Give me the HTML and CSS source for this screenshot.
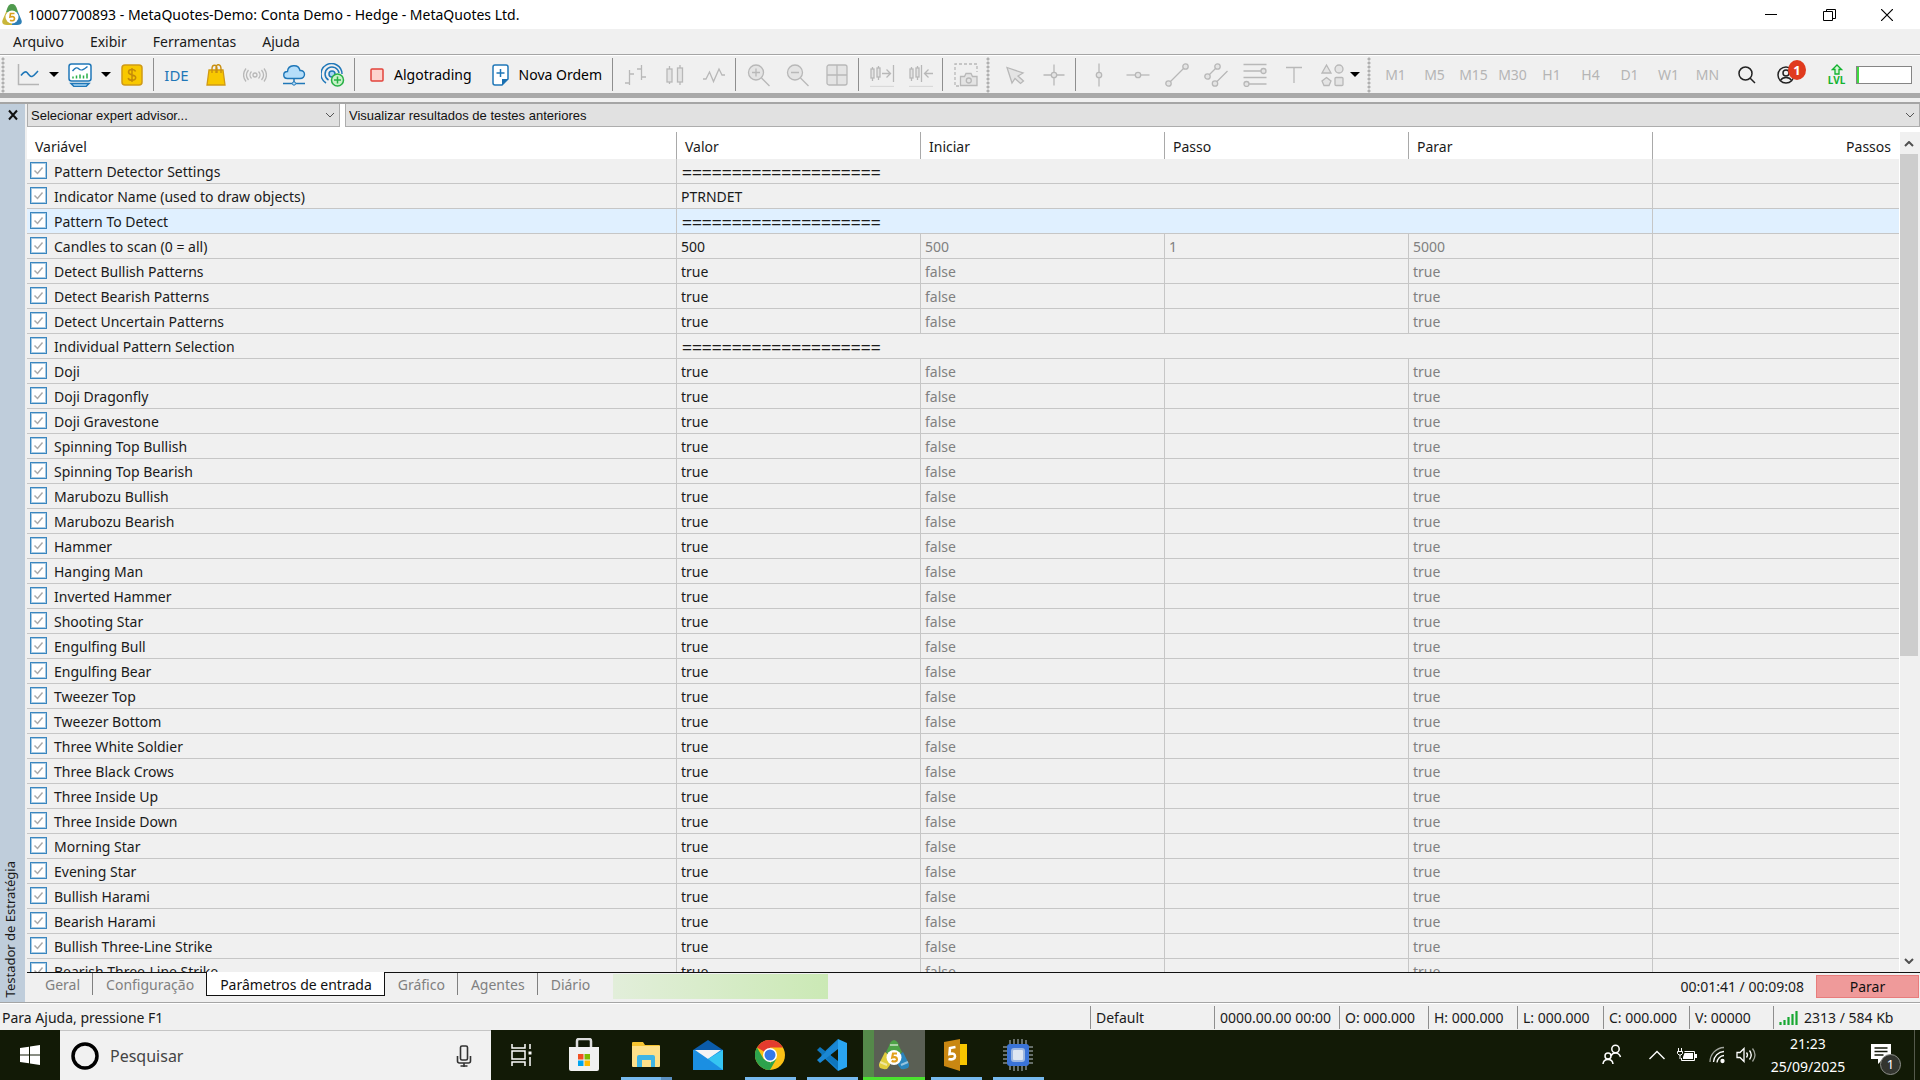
FILE: index.html
```html
<!DOCTYPE html>
<html lang="pt-BR">
<head>
<meta charset="utf-8">
<title>10007700893 - MetaQuotes-Demo: Conta Demo - Hedge - MetaQuotes Ltd.</title>
<link rel="stylesheet" href="styles.css">
</head>
<body>
<header class="titlebar">
  <svg class="app-icon" width="20" height="22" viewBox="0 0 20 22"><path d="M10 0c3 0 4 2 5 5l1 3-4 3H8L4 8l1-3c1-3 2-5 5-5z" fill="#4f9a4d"/><path d="M4 8l-3 7c-2 4 0 6 4 6h5V9z" fill="#c9b63a"/><path d="M16 8l3 7c2 4 0 6-4 6h-5V9z" fill="#2d7fb5"/><circle cx="10" cy="13" r="6.500" fill="#fff"/><path d="M12.500 9.500H8.500L8 13c3-1 4.500 0 4.500 1.800 0 2-2.500 2.400-4.500 1.400" fill="none" stroke="#d9a11f" stroke-width="1.700"/></svg>
  <h1 class="title">10007700893 - MetaQuotes-Demo: Conta Demo - Hedge - MetaQuotes Ltd.</h1>
  <div class="window-controls">
    <button class="win-btn" aria-label="Minimizar"><svg width="12" height="12" viewBox="0 0 12 12"><path d="M0 5.500h12" stroke="#000"/></svg></button>
    <button class="win-btn" aria-label="Restaurar"><svg width="13" height="12" viewBox="0 0 13 12"><path d="M.500 2.500h9v9h-9zM3.500 2.500V.500h9v9h-3" fill="none" stroke="#000"/></svg></button>
    <button class="win-btn" aria-label="Fechar"><svg width="12" height="12" viewBox="0 0 12 12"><path d="M0 0l12 12M12 0L0 12" stroke="#000" stroke-width="1.200"/></svg></button>
  </div>
</header>
<nav class="menubar">
  <button class="menu">Arquivo</button><button class="menu">Exibir</button><button class="menu">Ferramentas</button><button class="menu">Ajuda</button>
</nav>
<div class="toolbar" role="toolbar">
  <span class="grip first"></span>
  <button class="tool" aria-label="Gráfico"><svg width="24" height="24" viewBox="0 0 24 24" fill="none"><path d="M2.500 1v20.500H23" stroke="#b5b5b5" stroke-width="1.500"/><path d="M5 12.500c2.500-3 4.500-4.500 6-3s3 4.500 5 4 3.500-3 6-5.500" stroke="#1f77b8" stroke-width="1.600"/></svg></button>
  <button class="drop" aria-label="Mais gráficos"><i class="caret"></i></button>
  <button class="tool" aria-label="Perfis"><svg width="24" height="24" viewBox="0 0 24 24" fill="none"><rect x="1" y="1" width="22" height="17" rx="2.500" fill="#fff" stroke="#1f77b8" stroke-width="1.500"/><path d="M4.500 8c3-3.500 4.500-4 6.500-2s4 1.500 8.500-2.500" stroke="#1f77b8" stroke-width="1.400"/><path d="M5 15.500v-2M8.500 15.500v-3M12 15.500v-4M15.500 15.500v-3M19 15.500v-5" stroke="#27b045" stroke-width="1.500"/><path d="M3 20.500h18L18 23.500H6z" fill="#a9d6f5" stroke="#1f77b8" stroke-width="1.500"/></svg></button>
  <button class="drop" aria-label="Mais perfis"><i class="caret"></i></button>
  <button class="tool" aria-label="Símbolos"><svg width="24" height="24" viewBox="0 0 24 24"><rect x="2" y="2" width="20" height="20" rx="3" fill="#f8c800" stroke="#d09a15" stroke-width="1.500"/><path d="M15.500 8.500C15 7 13.500 6.500 12 6.500c-2 0-3.500 1-3.500 2.600 0 3.900 7.200 1.700 7.200 5.500 0 1.700-1.700 2.700-3.700 2.700S8.500 16.500 8.200 15M12 5v14" fill="none" stroke="#c48a08" stroke-width="1.500"/></svg></button>
  <span class="sep"></span>
  <button class="tool ide">IDE</button>
  <button class="tool" aria-label="Mercado"><svg width="24" height="24" viewBox="0 0 24 24"><path d="M5 7h14l2 15H3z" fill="#f8c800" stroke="#d09a15" stroke-width="1.300"/><path d="M8 10V6c0-5 5-5 5 0v4M12 10V5c0-5 5-4 5 1v4" fill="none" stroke="#c98f10" stroke-width="1.400"/></svg></button>
  <button class="tool" aria-label="Sinais"><svg width="24" height="24" viewBox="0 0 24 24" fill="none" stroke="#b8b8b8" stroke-width="1.300"><circle cx="12" cy="12" r="2"/><path d="M8.500 8.500c-2 2-2 5 0 7M15.500 8.500c2 2 2 5 0 7M5.500 7c-2.500 3-2.500 7 0 10M18.500 7c2.500 3 2.500 7 0 10M3 5.500c-3 4-3 9 0 13M21 5.500c3 4 3 9 0 13"/></svg></button>
  <button class="tool" aria-label="Nuvem"><svg width="24" height="24" viewBox="0 0 24 24"><path d="M5.500 15.500c-5 0-5-7 0-7 .5-7 11-8 12.500-1 6-.5 6 8 0 8z" fill="#b5defa" stroke="#1f77b8" stroke-width="1.400"/><path d="M12 16v3M1 20.500h9M14 20.500h9" stroke="#1f77b8" stroke-width="1.500"/><circle cx="12" cy="20.500" r="1.700" fill="#b5defa" stroke="#1f77b8"/></svg></button>
  <button class="tool" aria-label="Hospedagem virtual"><svg width="24" height="24" viewBox="0 0 24 24" fill="none" stroke="#1f77b8" stroke-width="1.500"><path d="M5 20A10.500 10.500 0 1 1 21 11"/><path d="M7.500 17A7 7 0 1 1 18 10"/><circle cx="11" cy="11" r="3" fill="#a9d6f5"/><circle cx="16.500" cy="17" r="6" fill="#c9f2c9" stroke="#27b045"/><path d="M16.500 13.500v7M13 17h7" stroke="#27b045"/></svg></button>
  <span class="sep"></span>
  <button class="text-tool"><svg width="14" height="14" viewBox="0 0 14 14"><rect x="1" y="1" width="12" height="12" rx="1" fill="#fdd3cd" stroke="#e2433b" stroke-width="1.500"/></svg>Algotrading</button>
  <button class="text-tool"><svg width="17" height="22" viewBox="0 0 17 22"><path d="M3 1h11c1.500 0 2 .5 2 2v12l-6 6H3c-1.500 0-2-.5-2-2V3c0-1.500.5-2 2-2z" fill="#fff" stroke="#1f77b8" stroke-width="1.500"/><path d="M16 15l-6 6v-6z" fill="#1a6fb0"/><path d="M8.500 5v8M4.500 9h8" stroke="#1f77b8" stroke-width="1.500"/></svg>Nova Ordem</button>
  <span class="sep"></span>
  <button class="tool off" aria-label="Barras"><svg width="24" height="24" viewBox="0 0 24 24"><path d="M5.500 7v15M1 20h4.500M5.500 11H10M17.500 2v15M13 6h4.500M17.500 14H22"/></svg></button>
  <button class="tool off" aria-label="Velas"><svg width="24" height="24" viewBox="0 0 24 24"><path d="M6.500 3v18M17 2v20"/><rect x="4" y="6" width="5" height="13"/><rect x="14.500" y="5" width="5" height="14"/></svg></button>
  <button class="tool off" aria-label="Linha"><svg width="24" height="24" viewBox="0 0 24 24"><path fill="none" d="M1 16h3l3.500-7 4 9.500L17 6l3 6h3"/></svg></button>
  <span class="sep"></span>
  <button class="tool off" aria-label="Ampliar"><svg width="24" height="24" viewBox="0 0 24 24"><circle cx="9" cy="9.500" r="7.500"/><path d="M14.500 15l8 8M9 5.500v8M5 9.500h8"/></svg></button>
  <button class="tool off" aria-label="Reduzir"><svg width="24" height="24" viewBox="0 0 24 24"><circle cx="9" cy="9.500" r="7.500"/><path d="M14.500 15l8 8M5 9.500h8"/></svg></button>
  <button class="tool off" aria-label="Janelas"><svg width="24" height="24" viewBox="0 0 24 24"><rect x="2" y="2" width="20" height="20" rx="2"/><path d="M12 2v20M2 12h20"/></svg></button>
  <span class="sep"></span>
  <button class="tool off" aria-label="Rolagem"><svg width="26" height="24" viewBox="0 0 26 24"><path d="M3.500 4v14M9.500 3v14"/><rect x="2" y="6" width="3" height="9"/><rect x="8" y="5" width="3" height="9"/><path fill="none" d="M13 10.500h8M17.500 6.500l4 4-4 4M24.500 2v17"/><path opacity=".4" d="M1 23.500h24"/></svg></button>
  <button class="tool off" aria-label="Deslocamento"><svg width="26" height="24" viewBox="0 0 26 24"><path d="M3.500 4v14M9.500 3v14"/><rect x="2" y="6" width="3" height="9"/><rect x="8" y="5" width="3" height="9"/><path fill="none" d="M13.500 2v17M17 10.500h8M20.500 6.500l-4 4 4 4"/><path opacity=".4" d="M1 23.500h24"/></svg></button>
  <span class="sep"></span>
  <button class="tool off" aria-label="Captura"><svg width="24" height="24" viewBox="0 0 24 24"><path fill="none" stroke-dasharray="3 2" d="M5 23H1V1h22v8"/><path d="M6.500 13.500h4l1.500-3h5l1.500 3h4.500v9H6.500z"/><circle cx="14.800" cy="17.500" r="2.500"/></svg></button>
  <span class="grip"></span>
  <button class="tool off" aria-label="Cursor"><svg width="24" height="24" viewBox="0 0 24 24"><path d="M4 4.500l16 5.500-5 3 5.500 5-3 2.500-5.500-5-3 4.500z"/></svg></button>
  <button class="tool off" aria-label="Mira"><svg width="24" height="24" viewBox="0 0 24 24"><path d="M12 1.500v21M1.500 12h21"/><circle cx="12" cy="12" r="2.700"/></svg></button>
  <span class="sep"></span>
  <button class="tool off" aria-label="Linha vertical"><svg width="24" height="24" viewBox="0 0 24 24"><path d="M12 .500v23"/><circle cx="12" cy="12" r="2.700"/></svg></button>
  <button class="tool off" aria-label="Linha horizontal"><svg width="24" height="24" viewBox="0 0 24 24"><path d="M.500 12h23"/><circle cx="12" cy="12" r="2.700"/></svg></button>
  <button class="tool off" aria-label="Tendência"><svg width="24" height="24" viewBox="0 0 24 24"><path d="M3.500 20.500L20.500 3.500"/><circle cx="3.500" cy="20.500" r="2.700"/><circle cx="20.500" cy="3.500" r="2.700"/></svg></button>
  <button class="tool off" aria-label="Canal"><svg width="24" height="24" viewBox="0 0 24 24"><path d="M3.500 13.500l10-10M11 20.500L23.500 8"/><circle cx="3.500" cy="13.500" r="2.700"/><circle cx="13.500" cy="3.500" r="2.700"/><circle cx="11" cy="20.500" r="2.700"/></svg></button>
  <button class="tool off" aria-label="Fibonacci"><svg width="24" height="24" viewBox="0 0 24 24"><path d="M.500 1.500h23M.500 8h18M.500 14.500h23M6 21h17.500"/><circle cx="20.500" cy="8" r="2.500"/><circle cx="3.500" cy="21" r="2.500"/></svg></button>
  <button class="tool off" aria-label="Texto"><svg width="24" height="24" viewBox="0 0 24 24"><path d="M4 4.500h16M12 4.500V20"/></svg></button>
  <button class="tool off" aria-label="Formas"><svg width="24" height="24" viewBox="0 0 24 24"><path d="M5.500 2l4.500 8H1z"/><circle cx="18" cy="6" r="4"/><path d="M5.500 14.500L10 18l-2 4.500H3L1 18z"/><rect x="14" y="14.500" width="8" height="8" rx="1"/></svg></button>
  <button class="drop tight" aria-label="Mais formas"><i class="caret"></i></button>
  <span class="grip"></span>
  <button class="tool frame">M1</button><button class="tool frame">M5</button><button class="tool frame">M15</button><button class="tool frame">M30</button><button class="tool frame">H1</button><button class="tool frame">H4</button><button class="tool frame">D1</button><button class="tool frame">W1</button><button class="tool frame">MN</button>
  <div class="tool-end">
    <button class="tool" aria-label="Pesquisar"><svg width="20" height="20" viewBox="0 0 20 20" fill="none" stroke="#222" stroke-width="1.500"><circle cx="8.500" cy="8.500" r="6.500"/><path d="M13 13l5 5"/></svg></button>
    <button class="tool account" aria-label="Conta"><svg width="18" height="18" viewBox="0 0 18 18" fill="none" stroke="#222" stroke-width="1.500"><circle cx="9" cy="9" r="8"/><circle cx="9" cy="7" r="3"/><path d="M3.500 14.500c2-4 9-4 11 0"/></svg><span class="badge">1</span></button>
    <button class="tool level" aria-label="Nível"><svg width="12" height="11" viewBox="0 0 12 11"><path d="M6 1l4.500 4.500H8v4.500H4V5.500H1.500z" fill="#d5f5d5" stroke="#12b32f" stroke-width="1.300"/></svg><span>LVL</span></button>
    <span class="meter"></span>
  </div>
</div>
<main class="tester">
  <aside class="side">
    <button class="side-close" aria-label="Fechar painel"><svg width="12" height="12" viewBox="0 0 12 12"><path d="M2 1.500l8 9M10 1.500l-8 9" stroke="#111" stroke-width="2"/></svg></button>
    <span class="side-title">Testador de Estratégia</span>
  </aside>
  <section class="panel">
    <div class="combos">
      <select class="combo expert" aria-label="Expert advisor"><option>Selecionar expert advisor...</option></select>
      <select class="combo results" aria-label="Resultados"><option>Visualizar resultados de testes anteriores</option></select>
    </div>
    <div class="grid">
      <div class="grid-view">
      <table class="inputs">
        <colgroup><col><col class="c-val"><col class="c-val"><col class="c-val"><col class="c-val"><col class="c-steps"></colgroup>
        <thead><tr><th>Variável</th><th>Valor</th><th>Iniciar</th><th>Passo</th><th>Parar</th><th>Passos</th></tr></thead>
        <tbody>
        <tr><td><label><input type="checkbox" checked>Pattern Detector Settings</label></td><td colspan="4" class="rule">====================</td><td></td></tr>
        <tr><td><label><input type="checkbox" checked>Indicator Name (used to draw objects)</label></td><td colspan="4">PTRNDET</td><td></td></tr>
        <tr class="selected"><td><label><input type="checkbox" checked>Pattern To Detect</label></td><td colspan="4" class="rule">====================</td><td></td></tr>
        <tr><td><label><input type="checkbox" checked>Candles to scan (0 = all)</label></td><td>500</td><td>500</td><td>1</td><td>5000</td><td></td></tr>
        <tr><td><label><input type="checkbox" checked>Detect Bullish Patterns</label></td><td>true</td><td>false</td><td></td><td>true</td><td></td></tr>
        <tr><td><label><input type="checkbox" checked>Detect Bearish Patterns</label></td><td>true</td><td>false</td><td></td><td>true</td><td></td></tr>
        <tr><td><label><input type="checkbox" checked>Detect Uncertain Patterns</label></td><td>true</td><td>false</td><td></td><td>true</td><td></td></tr>
        <tr><td><label><input type="checkbox" checked>Individual Pattern Selection</label></td><td colspan="4" class="rule">====================</td><td></td></tr>
        <tr><td><label><input type="checkbox" checked>Doji</label></td><td>true</td><td>false</td><td></td><td>true</td><td></td></tr>
        <tr><td><label><input type="checkbox" checked>Doji Dragonfly</label></td><td>true</td><td>false</td><td></td><td>true</td><td></td></tr>
        <tr><td><label><input type="checkbox" checked>Doji Gravestone</label></td><td>true</td><td>false</td><td></td><td>true</td><td></td></tr>
        <tr><td><label><input type="checkbox" checked>Spinning Top Bullish</label></td><td>true</td><td>false</td><td></td><td>true</td><td></td></tr>
        <tr><td><label><input type="checkbox" checked>Spinning Top Bearish</label></td><td>true</td><td>false</td><td></td><td>true</td><td></td></tr>
        <tr><td><label><input type="checkbox" checked>Marubozu Bullish</label></td><td>true</td><td>false</td><td></td><td>true</td><td></td></tr>
        <tr><td><label><input type="checkbox" checked>Marubozu Bearish</label></td><td>true</td><td>false</td><td></td><td>true</td><td></td></tr>
        <tr><td><label><input type="checkbox" checked>Hammer</label></td><td>true</td><td>false</td><td></td><td>true</td><td></td></tr>
        <tr><td><label><input type="checkbox" checked>Hanging Man</label></td><td>true</td><td>false</td><td></td><td>true</td><td></td></tr>
        <tr><td><label><input type="checkbox" checked>Inverted Hammer</label></td><td>true</td><td>false</td><td></td><td>true</td><td></td></tr>
        <tr><td><label><input type="checkbox" checked>Shooting Star</label></td><td>true</td><td>false</td><td></td><td>true</td><td></td></tr>
        <tr><td><label><input type="checkbox" checked>Engulfing Bull</label></td><td>true</td><td>false</td><td></td><td>true</td><td></td></tr>
        <tr><td><label><input type="checkbox" checked>Engulfing Bear</label></td><td>true</td><td>false</td><td></td><td>true</td><td></td></tr>
        <tr><td><label><input type="checkbox" checked>Tweezer Top</label></td><td>true</td><td>false</td><td></td><td>true</td><td></td></tr>
        <tr><td><label><input type="checkbox" checked>Tweezer Bottom</label></td><td>true</td><td>false</td><td></td><td>true</td><td></td></tr>
        <tr><td><label><input type="checkbox" checked>Three White Soldier</label></td><td>true</td><td>false</td><td></td><td>true</td><td></td></tr>
        <tr><td><label><input type="checkbox" checked>Three Black Crows</label></td><td>true</td><td>false</td><td></td><td>true</td><td></td></tr>
        <tr><td><label><input type="checkbox" checked>Three Inside Up</label></td><td>true</td><td>false</td><td></td><td>true</td><td></td></tr>
        <tr><td><label><input type="checkbox" checked>Three Inside Down</label></td><td>true</td><td>false</td><td></td><td>true</td><td></td></tr>
        <tr><td><label><input type="checkbox" checked>Morning Star</label></td><td>true</td><td>false</td><td></td><td>true</td><td></td></tr>
        <tr><td><label><input type="checkbox" checked>Evening Star</label></td><td>true</td><td>false</td><td></td><td>true</td><td></td></tr>
        <tr><td><label><input type="checkbox" checked>Bullish Harami</label></td><td>true</td><td>false</td><td></td><td>true</td><td></td></tr>
        <tr><td><label><input type="checkbox" checked>Bearish Harami</label></td><td>true</td><td>false</td><td></td><td>true</td><td></td></tr>
        <tr><td><label><input type="checkbox" checked>Bullish Three-Line Strike</label></td><td>true</td><td>false</td><td></td><td>true</td><td></td></tr>
        <tr><td><label><input type="checkbox" checked>Bearish Three-Line Strike</label></td><td>true</td><td>false</td><td></td><td>true</td><td></td></tr>
        </tbody>
      </table>
      </div>
      <div class="scrollbar">
        <svg width="10" height="6" viewBox="0 0 10 6"><path d="M1 5l4-4 4 4" fill="none" stroke="#505050" stroke-width="2"/></svg>
        <div class="track"><div class="thumb"></div></div>
        <svg width="10" height="6" viewBox="0 0 10 6"><path d="M1 1l4 4 4-4" fill="none" stroke="#505050" stroke-width="2"/></svg>
      </div>
    </div>
    <div class="tabs">
      <button class="tab">Geral</button><button class="tab">Configuração</button><button class="tab active">Parâmetros de entrada</button><button class="tab">Gráfico</button><button class="tab">Agentes</button><button class="tab">Diário</button>
      <div class="progress"></div>
      <span class="elapsed">00:01:41 / 00:09:08</span>
      <button class="stop">Parar</button>
    </div>
  </section>
</main>
<footer class="statusbar">
  <span class="status-help">Para Ajuda, pressione F1</span>
  <span class="cell profile">Default</span><span class="cell date">0000.00.00 00:00</span><span class="cell price">O: 000.000</span><span class="cell price">H: 000.000</span><span class="cell price low">L: 000.000</span><span class="cell price low">C: 000.000</span><span class="cell volume">V: 00000</span>
  <span class="cell traffic"><svg width="19" height="14" viewBox="0 0 19 14"><path d="M1.500 14v-3M5.500 14v-5M9.500 14V6M13.500 14V3M17.500 14V0" stroke="#18a832" stroke-width="2.200"/></svg>2313 / 584 Kb</span>
</footer>
<div class="taskbar">
  <button class="start" aria-label="Iniciar"><svg width="20" height="20" viewBox="0 0 20 20" fill="#fff"><path d="M0 3l9-1.300v7.800H0zM10 1.500L20 0v9.500H10zM0 10.500h9v7.800L0 17zM10 10.500h10V20l-10-1.500z"/></svg></button>
  <label class="search">
    <svg width="28" height="28" viewBox="0 0 28 28"><circle cx="14" cy="14" r="12" fill="none" stroke="#000" stroke-width="3.500"/></svg>
    <input type="text" placeholder="Pesquisar" aria-label="Pesquisar">
    <svg width="16" height="22" viewBox="0 0 16 22" fill="none" stroke="#333" stroke-width="1.600"><rect x="4.500" y="1" width="7" height="14" rx="1.500"/><path d="M1.500 11v5q0 2 2 2h9q2 0 2-2v-5M8 18v4M4.500 21h7"/></svg>
  </label>
  <button class="app" aria-label="Visão de tarefas"><svg width="22" height="24" viewBox="0 0 22 24" fill="none" stroke="#fff" stroke-width="1.500"><path d="M1 1v4h13V1M1 23v-4h13v4"/><rect x="1" y="8" width="13" height="8"/><path d="M19 1v5M19 14v9"/><path d="M17.500 10h3" stroke-width="3"/></svg></button>
  <button class="app" aria-label="Store"><svg width="30" height="34" viewBox="0 0 30 34"><path d="M8 10V3q0-2 2-2h10q2 0 2 2v7" fill="none" stroke="#ddd" stroke-width="2.500"/><path d="M0 9h30v22q0 2-2 2H2q-2 0-2-2z" fill="#f1f1f1"/><path d="M9 16h5.500v5.500H9z" fill="#f25022"/><path d="M15.500 16H21v5.500h-5.500z" fill="#7fba00"/><path d="M9 22.500h5.500V28H9z" fill="#00a4ef"/><path d="M15.500 22.500H21V28h-5.500z" fill="#ffb900"/></svg></button>
  <button class="app open multi" aria-label="Explorador"><svg width="28" height="26" viewBox="0 0 28 26"><path d="M0 1q0-1 1-1h10l2 3h14q1 0 1 1v4H0z" fill="#f5c431"/><path d="M0 4h28v20q0 1-1 1H1q-1 0-1-1z" fill="#fde08a"/><path d="M5 25V15q0-2 2-2h14q2 0 2 2v10h-4v-7h-9v7z" fill="#3fb5e5"/></svg></button>
  <button class="app" aria-label="E-mail"><svg width="30" height="30" viewBox="0 0 30 30"><path d="M0 10L15 0l15 10z" fill="#0b5cab"/><path d="M0 10h30v20H0z" fill="#1b8fe2"/><path d="M2 10h26L15 19z" fill="#f4f4f4"/><path d="M30 10L15 19l15 11z" fill="#35c5f2"/></svg></button>
  <button class="app open" aria-label="Chrome"><svg width="30" height="30" viewBox="0 0 30 30"><circle cx="15" cy="15" r="15" fill="#fbc116"/><path d="M15 15L2 7.500A15 15 0 0 1 28 7.500H15z" fill="#e33b2e"/><path d="M2 7.500l6.500 11.200L15 22v8A15 15 0 0 1 2 7.500z" fill="#2da24c"/><path d="M21.500 18.700L15 30l-3-.300 4-8z" fill="#2da24c"/><circle cx="15" cy="15" r="7" fill="#fff"/><circle cx="15" cy="15" r="5.500" fill="#3579e8"/></svg></button>
  <button class="app open" aria-label="Visual Studio Code"><svg width="30" height="32" viewBox="0 0 30 32"><path d="M21 0l-17 16 17 16v-9L13 16l8-7z" fill="#1583cf"/><path d="M0 11l3-3 18 14v8z" fill="#0f76bd"/><path d="M0 21l3 3L21 10V2z" fill="#1a87d4"/><path d="M21 0l9 4v24l-9 4z" fill="#2aa5f2"/></svg></button>
  <button class="app active" aria-label="MetaTrader 5"><svg width="30" height="30" viewBox="0 0 30 30"><path d="M15 0q4 1 5 6l3 6-3 3H10l-3-3 3-6q1-5 5-6z" fill="#4ea347"/><path d="M6 12l5 4v9l-3 4q-9 1-8-5z" fill="#e0cd3c"/><path d="M24 12l-5 4v9l3 4q9 1 8-5z" fill="#2a86bd"/><path d="M1 22l7 3M22 25l7-3M11 5h8" stroke="#fff" stroke-opacity=".5" stroke-width="2"/><circle cx="15" cy="17.500" r="7.500" fill="#fff"/><path d="M18 13.500h-4l-.800 4c3-1 4.800 0 4.800 2s-3 2.600-5.300 1.200" fill="none" stroke="#e2a11c" stroke-width="2.200"/></svg></button>
  <button class="app open" aria-label="MetaEditor"><svg width="24" height="32" viewBox="0 0 24 32"><path d="M10 5h13v21H10z" fill="#f6c500"/><path d="M0 3L16 0v32L0 27z" fill="#c98712"/><path d="M11.500 8L6 9l-.500 6c4-1 5.500 0 5.500 2.500S8 21 4.500 20" fill="none" stroke="#fff" stroke-width="2.600"/></svg></button>
  <button class="app open" aria-label="Processador"><svg width="30" height="32" viewBox="0 0 30 32"><path d="M7 1v30M11 0v32M15 0v32M19 0v32M23 1v30M0 8h30M0 12h30M0 16h30M0 20h30M0 24h30" stroke="#b9c2cc"/><rect x="4" y="5" width="22" height="22" rx="3" fill="#3a74d8"/><rect x="9" y="10" width="12" height="12" rx="2" fill="#dfe7f2" stroke="#9db7e0" stroke-width="2"/></svg></button>
  <div class="tray">
    <button class="tray-btn people" aria-label="Pessoas"><svg width="20" height="22" viewBox="0 0 20 22" fill="none" stroke="#fff" stroke-width="1.500"><circle cx="13.500" cy="5" r="3.700"/><path d="M9 12c2-4 8-4 9.500 1"/><circle cx="6" cy="12" r="3"/><path d="M1 20c.5-6 9.500-6 10 0"/></svg></button>
    <button class="tray-btn" aria-label="Ícones ocultos"><svg width="16" height="10" viewBox="0 0 16 10"><path d="M.500 9L8 1.500 15.500 9" fill="none" stroke="#fff" stroke-width="1.400"/></svg></button>
    <button class="tray-btn" aria-label="Bateria"><svg width="20" height="14" viewBox="0 0 20 14"><path d="M7.500 3.500h10v9h-13V10" fill="none" stroke="#fff"/><path d="M7.500 5H16v6H6V9z" fill="#fff"/><path d="M18 6h2v4h-2z" fill="#fff"/><path d="M1.500 0v3M4.500 0v3M.500 3.500h5v2L4 7H2L.500 5.500zM3 7v4" fill="none" stroke="#fff"/></svg></button>
    <button class="tray-btn" aria-label="Rede"><svg width="16" height="18" viewBox="0 0 16 18" fill="none" stroke="#fff" stroke-width="1.300"><path d="M1 16A14.500 14.500 0 0 1 15 1.500" opacity=".6"/><path d="M4.500 16A11 11 0 0 1 15 5.500M8 16.500A7.500 7.500 0 0 1 15 9.500"/><circle cx="13.500" cy="15" r="1.500" fill="#fff"/></svg></button>
    <button class="tray-btn" aria-label="Volume"><svg width="22" height="16" viewBox="0 0 22 16" fill="none" stroke="#fff" stroke-width="1.300"><path d="M1 5.500h3l4-4v13l-4-4H1z"/><path d="M10.500 5.500q2 2.500 0 5M13.500 3.500q3.500 4.500 0 9"/><path d="M16.500 1.500q5 6.500 0 13" opacity=".6"/></svg></button>
    <div class="clock"><time>21:23</time><time>25/09/2025</time></div>
    <button class="notify" aria-label="Notificações"><svg width="20" height="20" viewBox="0 0 20 20"><path d="M0 0h20v15h-8l-5 5v-5H0z" fill="#fff"/><path d="M3.500 4h13M3.500 7.500h13M3.500 11h9" stroke="#14190a" stroke-width="1.300"/></svg><span class="count">1</span></button>
  </div>
</div>
</body>
</html>
```
FILE: styles.css
```css
* { box-sizing: border-box; }
html, body { height: 100%; }
body {
  margin: 0;
  display: flex;
  flex-direction: column;
  overflow: hidden;
  background: #f0f0f0;
  color: #1a1a1a;
  font: 14px/20px "Noto Sans", "Open Sans", sans-serif;
}
button {
  padding: 0;
  border: 0;
  background: none;
  color: inherit;
  font: inherit;
}
svg { display: block; flex: none; }

/* Title bar and menu */
.titlebar {
  display: flex;
  align-items: center;
  height: 29px;
  padding-left: 2px;
  background: #fff;
  flex: none;
}
.title { margin: 0 0 0 6px; font-size: 14px; font-weight: 400; color: #000; }
.window-controls { display: flex; margin-left: auto; padding-right: 4px; }
.win-btn { display: grid; place-items: center; width: 58px; height: 28px; }
.menubar {
  display: flex;
  gap: 26px;
  height: 26px;
  padding-left: 13px;
  border-bottom: 1px solid #a5a5a5;
  flex: none;
}

/* Toolbar */
.toolbar {
  display: flex;
  align-items: center;
  height: 43px;
  border-top: 1px solid #fff;
  border-bottom: 5px solid #a9a9a9;
  background: #f0f0f0;
  flex: none;
}
.grip {
  width: 10px;
  height: 36px;
  flex: none;
  background: radial-gradient(circle, #b0b0b0 1px, transparent 2px) 1px 0 / 4px 4px repeat-y;
}
.grip.first { width: 8px; }
.tool {
  display: flex;
  align-items: center;
  justify-content: center;
  width: 39px;
  height: 36px;
  flex: none;
}
.ide { color: #1f77b8; font-size: 15px; }
.off svg { fill: #e4e4e4; stroke: #b8b8b8; stroke-width: 1.3; }
.frame { color: #b5b5b5; }
.sep { width: 1px; height: 33px; margin: 0 3px 0 2px; background: #8e8e8e; flex: none; }
.drop { width: 13px; height: 36px; display: grid; place-items: center; flex: none; }
.drop.tight { margin: 0 5px 0 -4px; }
.caret { border: 5px solid transparent; border-top-color: #000; border-bottom: 0; }
.text-tool {
  display: flex;
  align-items: center;
  gap: 10px;
  height: 36px;
  padding: 0 8px 0 12px;
  color: #000;
  white-space: nowrap;
  flex: none;
}
.tool-end { display: flex; align-items: center; margin-left: auto; padding-right: 8px; }
.account { position: relative; }
.badge {
  position: absolute;
  left: 22px;
  top: 3px;
  width: 18px;
  height: 20px;
  border-radius: 50%;
  background: #e03a1e;
  color: #fff;
  font-size: 13px;
  font-weight: 700;
}
.level {
  flex-direction: column;
  margin: 0 0 0 12px;
  color: #12b32f;
  font-size: 10px;
  font-weight: 700;
  line-height: 11px;
}
.meter {
  width: 56px;
  height: 18px;
  border: 1px solid #858585;
  background: linear-gradient(90deg, #3fd93f 2px, #fff 2px);
}

/* Strategy tester */
.tester {
  display: flex;
  flex: 1;
  min-height: 0;
  margin-top: 4px;
  border-top: 2px solid #a5a5a5;
  border-bottom: 1px solid #a5a5a5;
}
.side {
  display: flex;
  flex-direction: column;
  align-items: center;
  justify-content: space-between;
  width: 25px;
  padding: 5px 5px 5px 0;
  background: #bfcddb;
  flex: none;
}
.side-close { margin-left: 5px; }
.side-title { writing-mode: vertical-rl; transform: rotate(180deg); font-size: 13px; }
.panel { display: flex; flex-direction: column; flex: 1; min-width: 0; padding-left: 2px; }
.combos { display: flex; gap: 5px; background: #fff; flex: none; }
.combo {
  appearance: none;
  height: 23px;
  padding: 2px 24px 0 3px;
  border: 1px solid #adadad;
  border-top: 0;
  border-radius: 0;
  background: #e1e1e1 url("data:image/svg+xml,%3Csvg xmlns='http://www.w3.org/2000/svg' width='10' height='6'%3E%3Cpath d='M1 1l4 4 4-4' fill='none' stroke='%23555'/%3E%3C/svg%3E") no-repeat right 4px center;
  color: #111;
  font: 13px/20px "Liberation Sans", Arial, sans-serif;
}
.expert { width: 313px; }
.results { flex: 1; }
.grid { display: flex; flex: 1; min-height: 0; padding-top: 5px; background: #fff; }
.grid-view { flex: 1; min-width: 0; overflow: hidden; background: #f0f0f0; }
.inputs { width: 100%; table-layout: fixed; border-collapse: separate; border-spacing: 0; }
.c-val { width: 244px; }
.c-steps { width: 247px; }
.inputs th {
  height: 27px;
  padding: 2px 8px 0;
  background: #fff;
  border-left: 1px solid #a9a9a9;
  font-weight: 400;
  text-align: left;
}
.inputs th:first-child { border-left: 0; }
.inputs th:last-child { text-align: right; }
.inputs td {
  height: 25px;
  padding: 2px 4px 0;
  border-left: 1px solid #c6c6c6;
  border-bottom: 1px solid #c6c6c6;
  color: #808080;
  white-space: nowrap;
}
.inputs td:first-child { padding-left: 3px; border-left: 0; }
.inputs td:nth-child(-n+2) { color: #1a1a1a; }
.inputs .rule { padding: 4px 0 0 5px; font: 17px/20px "Liberation Sans", Arial, sans-serif; }
.inputs .selected td { background: #e0f0ff; }
.inputs label { display: flex; align-items: center; gap: 7px; height: 20px; }
.inputs input {
  appearance: none;
  width: 17px;
  height: 17px;
  margin: 0 0 4px;
  border: 1px solid #3a86bf;
  outline: 1px solid #a8cae2;
  outline-offset: -2px;
  background: #fff;
}
.inputs input:checked {
  background: #fff url("data:image/svg+xml,%3Csvg xmlns='http://www.w3.org/2000/svg' width='11' height='9'%3E%3Cpath d='M1.500 4.500l3 3 5-6' fill='none' stroke='%23aaa' stroke-width='1.500'/%3E%3C/svg%3E") no-repeat center;
}
.scrollbar {
  display: flex;
  flex-direction: column;
  align-items: center;
  width: 21px;
  padding: 9px 2px 8px 0;
  background: #f0f0f0;
  border-left: 1px solid #fff;
  flex: none;
}
.track { flex: 1; align-self: stretch; margin: 7px 0; }
.thumb { height: 63%; background: #cdcdcd; }

/* Tester tabs */
.tabs {
  display: flex;
  align-items: flex-start;
  height: 30px;
  border-top: 1px solid #111;
  flex: none;
}
.tab { height: 22px; padding: 2px 12px 0 13px; color: #808080; white-space: nowrap; }
.tab:first-child { padding-left: 18px; }
.tab + .tab { border-left: 1px solid #808080; }
.tabs .active { height: 24px; margin-top: -1px; border: 1px solid #111; border-top: 0; background: #fff; color: #111; }
.tabs .active + .tab { border-left: 0; }
.progress { width: 215px; height: 25px; margin: 1px auto 0 11px; background: linear-gradient(90deg, #e2eeda, #cbe9b5); }
.elapsed { margin: 4px 12px 0 0; }
.stop { width: 103px; height: 23px; margin: 2px 1px 0 0; border: 1px solid #e87c7c; background: #ef9a9a; color: #111; line-height: 20px; }

/* Status bar */
.statusbar {
  display: flex;
  height: 27px;
  padding: 2px 0 1px;
  line-height: 24px;
  border-top: 1px solid #fff;
  white-space: nowrap;
  flex: none;
}
.status-help { flex: 1; padding-left: 2px; }
.cell { padding-left: 5px; border-left: 1px solid #8e8e8e; }
.profile { width: 124px; }
.date { width: 125px; }
.price { width: 89px; }
.low { width: 86px; }
.volume { width: 84px; }
.traffic { display: flex; align-items: center; gap: 6px; width: 147px; }

/* Taskbar */
.taskbar { display: flex; height: 50px; background: #121a06; color: #fff; flex: none; }
.start { display: grid; place-items: center; width: 60px; }
.search {
  display: flex;
  align-items: center;
  width: 431px;
  padding: 0 19px 0 11px;
  border-top: 1px solid #c5c5c5;
  background: #f1f1f1;
}
.search input { flex: 1; min-width: 0; padding: 0 0 0 11px; border: 0; background: none; font: 16px/24px "Noto Sans", sans-serif; }
.search input::placeholder { color: #444; opacity: 1; }
.app { display: grid; place-items: center; width: 62px; height: 50px; flex: none; }
.open { background: linear-gradient(#76b9ed, #76b9ed) no-repeat center bottom / 51px 3px; }
.multi { background: linear-gradient(90deg, #76b9ed 40px, #5a8fc0 40px) no-repeat center bottom / 51px 3px; }
.active.app { background: linear-gradient(90deg, #55894a 11px, #5a5f54 11px); box-shadow: inset 0 -3px #4be22f; }
.tray { display: flex; align-items: center; margin-left: auto; border-right: 1px solid #555a4c; margin-right: 5px; }
.tray-btn { display: grid; place-items: center; width: 30px; height: 50px; }
.people { margin-right: 15px; }
.clock { display: flex; flex-direction: column; align-items: center; width: 92px; line-height: 23px; }
.notify { position: relative; width: 20px; height: 50px; margin: 0 23px 0 17px; padding-bottom: 2px; }
.count {
  position: absolute;
  left: 9px;
  top: 24px;
  width: 21px;
  height: 21px;
  border: 1px solid #8d8f8a;
  border-radius: 50%;
  background: #33352f;
  font-size: 13px;
  line-height: 18px;
}
```
